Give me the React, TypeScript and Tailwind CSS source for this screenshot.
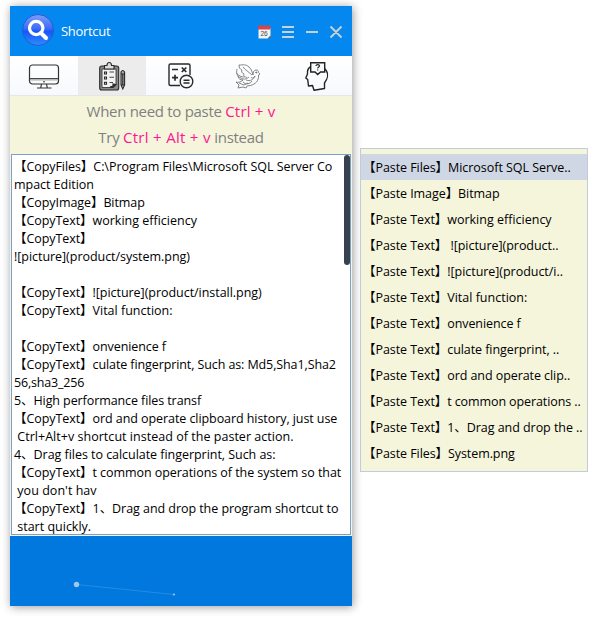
import type { ReactNode } from "react";

const history: [string, string, string][] = [
  ["CopyFiles", "C:\\Program Files\\Microsoft SQL Server Co", "tracking-[-0.04px]"],
  ["", "mpact Edition", "tracking-[-0.04px]"],
  ["CopyImage", "Bitmap", "tracking-[-0.08px]"],
  ["CopyText", "working efficiency", "tracking-[0px]"],
  ["CopyText", "", ""],
  ["", "![picture](product/system.png)", "tracking-[-0.04px]"],
  ["", "", ""],
  ["CopyText", "![picture](product/install.png)", "tracking-[-0.04px]"],
  ["CopyText", "Vital function:", "tracking-[0px]"],
  ["", "", ""],
  ["CopyText", "onvenience f", "tracking-[-0.08px]"],
  ["CopyText", "culate fingerprint, Such as: Md5,Sha1,Sha2", "tracking-[-0.1px]"],
  ["", "56,sha3_256", "tracking-[-0.18px]"],
  ["", "5、High performance files transf", "tracking-[-0.09px]"],
  ["CopyText", "ord and operate clipboard history, just use", "tracking-[-0.07px]"],
  ["", " Ctrl+Alt+v shortcut instead of the paster action.", "tracking-[0.03px]"],
  ["", "4、Drag files to calculate fingerprint, Such as:", "tracking-[-0.04px]"],
  ["CopyText", "t common operations of the system so that", "tracking-[-0.06px]"],
  ["", " you don't hav", "tracking-[0.04px]"],
  ["CopyText", "1、Drag and drop the program shortcut to", "tracking-[-0.05px]"],
  ["", " start quickly.", "tracking-[0px]"],
];

const menu: [string, string, string][] = [
  ["Paste Files", "Microsoft SQL Serve..", "tracking-[-0.04px]"],
  ["Paste Image", "Bitmap", "tracking-[-0.08px]"],
  ["Paste Text", "working efficiency", "tracking-[0px]"],
  ["Paste Text", " ![picture](product..", "tracking-[-0.04px]"],
  ["Paste Text", "![picture](product/i..", "tracking-[-0.04px]"],
  ["Paste Text", "Vital function:", "tracking-[0px]"],
  ["Paste Text", "onvenience f", "tracking-[-0.08px]"],
  ["Paste Text", "culate fingerprint, ..", "tracking-[-0.07px]"],
  ["Paste Text", "ord and operate clip..", "tracking-[-0.07px]"],
  ["Paste Text", "t common operations ..", "tracking-[-0.1px]"],
  ["Paste Text", "1、Drag and drop the ..", "tracking-[-0.05px]"],
  ["Paste Files", "System.png", "tracking-[-0.08px]"],
];

function Entry({ label, text, track }: { label: string; text: string; track: string }) {
  return (
    <>
      {label && <span className="tracking-[-0.07px]">【{label}】</span>}
      <span className={track}>{text}</span>
    </>
  );
}

function Tab({ active, children }: { active?: boolean; children: ReactNode }) {
  return (
    <div className={`flex h-full w-[68px] items-center justify-center ${active ? "bg-[#ececec]" : ""}`}>{children}</div>
  );
}

function Logo() {
  return (
    <svg className="mb-[2px]" width="32" height="32" viewBox="0 0 32 32">
      <defs>
        <linearGradient id="orb" x1="0" y1="0" x2="0" y2="1">
          <stop offset="0" stopColor="#7f9cf8" />
          <stop offset="0.45" stopColor="#3d6cf6" />
          <stop offset="0.55" stopColor="#1757f8" />
          <stop offset="1" stopColor="#2f8dfb" />
        </linearGradient>
      </defs>
      <circle cx="16" cy="16" r="15.5" fill="url(#orb)" stroke="#1d5fd8" strokeWidth="1" />
      <circle cx="14.2" cy="14" r="6.7" fill="none" stroke="#fff" strokeWidth="3.2" />
      <path d="M19 19l5 5" stroke="#fff" strokeWidth="4" strokeLinecap="round" />
    </svg>
  );
}

function Calendar() {
  return (
    <svg className="mt-[2px]" width="13" height="14" viewBox="0 0 13 14">
      <path d="M0.5 3h12v8l-2.500 2.500H0.500z" fill="#f4f4f0" />
      <path d="M0 .5h12.500v4H0z" fill="#d94450" />
      <path d="M0 1h12.500" stroke="#80606c" strokeDasharray="1.500 1" />
      <path d="M12.500 10.500v3H9.500z" fill="#666" />
      <text x="2.500" y="11" fontSize="6.500" className="font-['Liberation_Sans',sans-serif]" fill="#444">26</text>
    </svg>
  );
}

function Monitor() {
  return (
    <svg width="32" height="26" viewBox="0 0 32 26" fill="none" stroke="#333" strokeWidth="1.200">
      <rect x="1.500" y="2" width="29" height="19" rx="3" />
      <path d="M2 15.700h28" />
      <path d="M2.500 17h27" stroke="#aaa" strokeWidth="1" />
      <path d="M13.500 21l-.7 3.500M18.500 21l.7 3.500M9 25h14.500" />
      <circle cx="16" cy="18.800" r=".8" fill="#222" stroke="none" />
    </svg>
  );
}

function Clipboard() {
  return (
    <svg width="28" height="30" viewBox="0 0 28 30" fill="none" stroke="#292929" strokeWidth="1.100">
      <rect x="1.700" y="5" width="19" height="24" rx="2" fill="#8a8a8a" />
      <path d="M4 8h14v15l-3.500 3.500H4z" fill="#f3f3f3" strokeWidth=".8" />
      <path d="M12 26l3-1v-2l3 .5-3 3z" fill="#333" />
      <path d="M6.500 4.500h2.500c0-4 4.500-4 4.500 0h2.500v3.500H6.500z" fill="#ddd" />
      <path d="M6.500 11h2v2h-2zM6.500 16h2v2h-2zM6.500 21.300h2v2h-2z" />
      <path d="M11.500 11h4.500M11.500 16.200h4.500M11.500 21.500h3.500" stroke="#444" />
      <path d="M23 11q1.800-3 3.600 0v13l-1.800 4L23 24z" fill="#aaa" />
      <path d="M23 13h3.600M23 24h3.600M24.800 13v11" />
    </svg>
  );
}

function Calculator() {
  return (
    <svg width="27" height="28" viewBox="0 0 27 28" fill="none" stroke="#292929" strokeWidth="1.400">
      <path d="M13 23.500H3.500a1.500 1.500 0 0 1-1.500-1.500V3.500A1.500 1.500 0 0 1 3.500 2h18A1.500 1.500 0 0 1 23 3.500V13" />
      <path d="M5 7.500h6M14.800 5.500l4.500 4.500M19.300 5.500l-4.500 4.500M5 15.700h6M8 12.700v6" strokeWidth="1.700" />
      <circle cx="19.500" cy="19.500" r="6.300" />
      <path d="M16.500 18.200h6M16.500 21h6" strokeWidth="1.500" />
    </svg>
  );
}

function Dove() {
  return (
    <svg width="26" height="28" viewBox="0 0 26 28" fill="none" stroke="#777" strokeWidth=".9" strokeLinejoin="round">
      <path d="M4 3c4 0 7-1 10 2s3 5 4 8c0-3 1-5 3-5s2.500 1 2.500 2.500L25 12l-1.500 1c.5 6-3 9-8 10.500" />
      <path d="M4 3c0 3 1 4 3 5-1 1.500 0 3 2 4-1 2 1 3 3 3.500M8 5c2 3 6 5 9 8M2 7c-1 4 0 8 4 9 3 2 6 1 8-1M1.500 11c2 3 5 4 8 4M3 14c0 3 3 4 5 4" />
      <path d="M8 18c-2 2-5 3-7 2l3 3-1 3 5-1 3 1 1-2 3.500-.5M4 21l5 2 4-2M11 18c4 2 8-1 9-4M8 20c3 3 7 2 9-1M16 15c1 2 3 1 4-1" />
      <circle cx="21.300" cy="10.500" r=".6" fill="#555" />
    </svg>
  );
}

function Thinker() {
  return (
    <svg width="25" height="30" viewBox="0 0 25 30" fill="none" stroke="#222" strokeWidth="1.400">
      <path d="M7 5.500C4 7 3 9 3.500 13L1.800 17 3.700 18.500 4.500 25 8.500 24.500 10 29.200 20.500 27.500V22C23.500 18 24.500 13 22.500 10L20.500 7.500" strokeLinejoin="round" />
      <path d="M6.700 1.700h14V11h-4.200l-2.800 2.500L11 11H6.700z" fill="#fafafa" />
      <path d="M12 5c0-2 3.500-1.800 3.500 0 0 1.200-1.800 1-1.800 2.500M13.700 8.500v1" strokeWidth="1.200" />
    </svg>
  );
}

export default function App() {
  return (
    <div className="flex h-[617px] w-[604px] items-start overflow-hidden bg-white pl-[10px] pt-[6px] font-['Open_Sans','Noto_Sans_CJK_SC',sans-serif] text-black">
      <main className="flex h-[600px] w-[342px] shrink-0 flex-col bg-[#0078dd] shadow-[1px_1px_9px_rgba(0,0,0,0.4)]">
        <header className="flex h-[50px] items-center bg-[#0487ef] pl-[12px] pr-[8px] text-white">
          <Logo />
          <span className="ml-[7px] mt-[2px] flex-1 text-[13px] tracking-[-0.3px]">Shortcut</span>
          <Calendar />
          <svg className="ml-[11px] mt-[2px]" width="62" height="14" viewBox="0 0 62 14" fill="none" stroke="#c6d1da" strokeWidth="2">
            <path d="M0 2h12M0 7h12M0 12h12M24 7h12M48.500 1.500l11 11M59.500 1.500l-11 11" />
          </svg>
        </header>
        <nav className="flex h-[40px] shrink-0 border-b border-[#e3e6ea] bg-linear-to-b from-white to-[#f7f9fd]">
          <Tab><Monitor /></Tab>
          <Tab active><Clipboard /></Tab>
          <Tab><Calculator /></Tab>
          <Tab><Dove /></Tab>
          <Tab><Thinker /></Tab>
        </nav>
        <section className="h-[58px] shrink-0 bg-[#f5f5dc] pt-[2px] text-center text-[15px] leading-[26px] tracking-[-0.3px] text-[#808080]">
          <p>When need to paste <span className="tracking-[0.2px] text-[#ff1493]">Ctrl + v</span></p>
          <p>Try <span className="tracking-[0.3px] text-[#ff1493]">Ctrl + Alt + v</span> instead</p>
        </section>
        <section className="flex h-[382px] shrink-0 bg-[#f5f5dc] px-px pb-px">
          <div className="flex flex-1 justify-between border border-[#7ba0d0] bg-white pl-[2px]">
            <div className="pt-[3px] text-[12.500px] leading-[18px]">
              {history.map(([label, text, track], i) => (
                <div key={i} className="h-[18px] whitespace-pre"><Entry label={label} text={text} track={track} /></div>
              ))}
            </div>
            <div className="h-[110px] w-[6px] rounded-[3px] bg-[#36424f]" />
          </div>
        </section>
        <footer className="flex-1">
          <svg width="342" height="70">
            <path d="M66.500 48.500L164 58.500" stroke="#3d9ae6" strokeOpacity=".6" />
            <circle cx="66.500" cy="48.500" r="2.700" fill="#9dc8ed" />
            <circle cx="164" cy="58.500" r="1.100" fill="#9dc8ed" />
          </svg>
        </footer>
      </main>
      <aside className="ml-[8px] mt-[142px] h-[324px] w-[228px] shrink-0 border border-[#c0ccda] bg-[#f5f5dc] pt-[5px] text-[12.500px] leading-[28px]">
        {menu.map(([label, text, track], i) => (
          <div key={i} className={`h-[26px] whitespace-pre pl-[2px] ${i === 0 ? "bg-[#cfd7e5]" : ""}`}><Entry label={label} text={text} track={track} /></div>
        ))}
      </aside>
    </div>
  );
}
